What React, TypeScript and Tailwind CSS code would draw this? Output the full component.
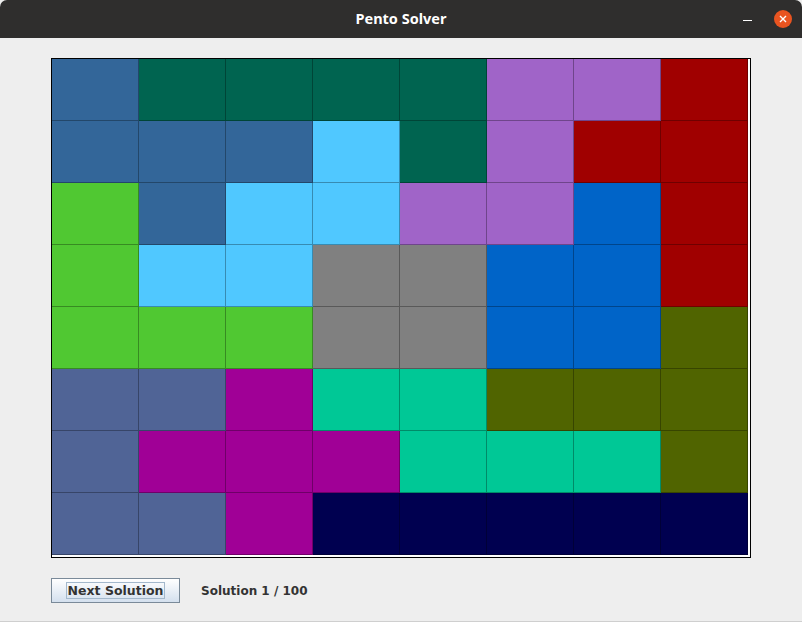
import React from "react";

const C: Record<string, string> = {
  B: "#336699",
  D: "#006450",
  P: "#a064c8",
  R: "#a00000",
  L: "#50c8ff",
  G: "#50c832",
  M: "#0064c8",
  Y: "#808080",
  O: "#506400",
  S: "#506496",
  X: "#a00096",
  T: "#00c896",
  N: "#000050",
};

const rows = [
  "BDDDDPPR",
  "BBBLDPRR",
  "GBLLPPMR",
  "GLLYYMMR",
  "GGGYYMMO",
  "SSXTTOOO",
  "SXXXTTTO",
  "SSXNNNNN",
];

export default function App() {
  return (
    <div
      className="w-[802px] h-[622px] bg-[#eeeeee] flex flex-col overflow-hidden"
      style={{ fontFamily: "'DejaVu Sans', sans-serif" }}
    >
      <div className="h-[38px] bg-[#2f2e2d] rounded-t-[7px] flex items-center justify-center relative shrink-0">
        <span className="text-white font-bold text-[14.5px]" style={{ fontFamily: "'Noto Sans', 'DejaVu Sans', sans-serif" }}>
          Pento Solver
        </span>
        <div className="absolute left-[743px] top-[20px] w-[9px] h-[1px] bg-white" />
        <div className="absolute left-[774px] top-[10px] w-[18px] h-[18px] rounded-full bg-[#e95420] flex items-center justify-center">
          <svg width="8" height="8" viewBox="0 0 8 8">
            <path d="M1 1 L7 7 M7 1 L1 7" stroke="white" strokeWidth="1.4" />
          </svg>
        </div>
      </div>
      <div className="flex-1 flex flex-col pl-[51px] pt-[20px] border-b border-[#cfcfcf]">
        <div className="w-[700px] h-[500px] border border-black bg-white">
          <div className="grid grid-cols-[repeat(8,87px)] grid-rows-[repeat(8,62px)]">
            {rows.flatMap((r, ri) =>
              r.split("").map((k, ci) => (
                <div
                  key={`${ri}-${ci}`}
                  className="border-r border-b border-black/30"
                  style={{ backgroundColor: C[k] }}
                />
              ))
            )}
          </div>
        </div>
        <div className="flex items-center mt-[20px] gap-[21px]">
          <button className="w-[129px] h-[25px] border border-[#7a8a99] bg-gradient-to-b from-white to-[#d4e0ee] flex items-center justify-center">
            <span className="border border-[#a3b8cc] px-[1px] leading-[15px] text-[12.5px] font-bold text-[#333333]">
              Next Solution
            </span>
          </button>
          <span className="text-[12px] font-bold text-[#333333] pt-[1px]">Solution 1 / 100</span>
        </div>
      </div>
    </div>
  );
}
